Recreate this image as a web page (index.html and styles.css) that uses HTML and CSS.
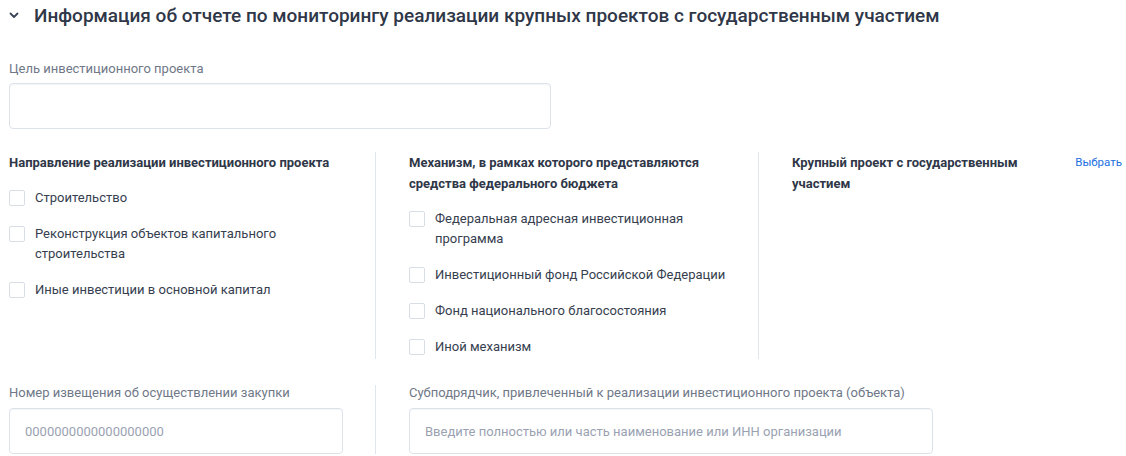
FILE: index.html
```html
<!DOCTYPE html>
<html>
<head>
    <title>Информация об отчете</title>
    <link rel="stylesheet" href="styles.css">
</head>
<body>
    <div class="section">
        <div class="section-header">
            <svg class="chevron" width="12" height="12" viewBox="0 0 12 12">
                <path d="M2.5 4.5 L6 8 L9.5 4.5" fill="none" stroke="#3a4356" stroke-width="1.8" stroke-linecap="round" stroke-linejoin="round"/>
            </svg>
            <h2>Информация об отчете по мониторингу реализации крупных проектов с государственным участием</h2>
        </div>

        <div class="field goal">
            <label class="field-label">Цель инвестиционного проекта</label>
            <div class="input"></div>
        </div>

        <div class="columns">
            <div class="col">
                <div class="col-title">Направление реализации инвестиционного проекта</div>
                <div class="checks">
                    <label class="check"><span class="box"></span><span>Строительство</span></label>
                    <label class="check"><span class="box"></span><span>Реконструкция объектов капитального строительства</span></label>
                    <label class="check"><span class="box"></span><span>Иные инвестиции в основной капитал</span></label>
                </div>
            </div>
            <div class="col">
                <div class="col-title">Механизм, в рамках которого представляются средства федерального бюджета</div>
                <div class="checks">
                    <label class="check"><span class="box"></span><span>Федеральная адресная инвестиционная программа</span></label>
                    <label class="check"><span class="box"></span><span>Инвестиционный фонд Российской Федерации</span></label>
                    <label class="check"><span class="box"></span><span>Фонд национального благосостояния</span></label>
                    <label class="check"><span class="box"></span><span>Иной механизм</span></label>
                </div>
            </div>
            <div class="col">
                <div class="col-head">
                    <div class="col-title">Крупный проект с государственным участием</div>
                    <a class="link" href="#">Выбрать</a>
                </div>
            </div>
        </div>

        <div class="columns bottom">
            <div class="col">
                <label class="field-label">Номер извещения об осуществлении закупки</label>
                <div class="input small placeholder">0000000000000000000</div>
            </div>
            <div class="col">
                <label class="field-label">Субподрядчик, привлеченный к реализации инвестиционного проекта (объекта)</label>
                <div class="input wide placeholder">Введите полностью или часть наименование или ИНН организации</div>
            </div>
        </div>
    </div>
</body>
</html>
```

FILE: styles.css
```css
/* Global styles */
body {
    font-family: Roboto, 'Liberation Sans', Arial, sans-serif;
    background-color: #ffffff;
    color: #333b4c;
    margin: 0;
    padding: 0 4px 0 9px;
}

/* Section header */
.section-header {
    display: flex;
    align-items: center;
    height: 30px;
    margin-left: -1px;
}

.chevron {
    margin-right: 14px;
}

.section-header h2 {
    margin: 0;
    font-size: 19px;
    font-weight: 500;
    color: #2f3748;
    white-space: nowrap;
}

/* Fields */
.field-label {
    display: block;
    font-size: 13px;
    line-height: 16px;
    color: #6f7888;
    margin-bottom: 7px;
}

.goal {
    margin-top: 31px;
}

.goal .field-label {
    margin-bottom: 6px;
}

.input {
    box-sizing: border-box;
    height: 46px;
    width: 542px;
    border: 1px solid #dce2ea;
    border-radius: 4px;
    box-shadow: inset 0 1px 1px rgba(0, 0, 0, 0.04);
    font-size: 13px;
    display: flex;
    align-items: center;
    padding: 0 15px;
}

.input.small {
    width: 334px;
}

.input.wide {
    width: 524px;
}

.placeholder {
    color: #9aa2b2;
}

/* Columns */
.columns {
    display: grid;
    grid-template-columns: 366px 383px 1fr;
    margin-top: 23px;
}

.col {
    padding: 0 20px 0 33px;
    border-left: 1px solid #e1e6ee;
}

.col:first-child {
    padding-left: 0;
    border-left: none;
}

.col:last-child {
    padding-right: 0;
}

.col-head {
    display: flex;
    justify-content: space-between;
    align-items: flex-start;
}

.col-head .col-title {
    width: 250px;
}

.col-title {
    font-size: 13px;
    font-weight: 700;
    line-height: 21px;
    color: #2f3748;
}

.link {
    font-size: 11.5px;
    line-height: 21px;
    color: #1b6fe0;
    text-decoration: none;
}

.checks {
    display: flex;
    flex-direction: column;
    gap: 16px;
    margin-top: 15px;
    padding-bottom: 2px;
}

.check {
    display: flex;
    align-items: flex-start;
    font-size: 13px;
    line-height: 20px;
    color: #363e4f;
}

.box {
    flex: none;
    box-sizing: border-box;
    width: 16px;
    height: 16px;
    border: 1px solid #d8dde6;
    border-radius: 2px;
    margin: 2px 10px 0 0;
}

/* Bottom row */
.columns.bottom {
    margin-top: 26px;
    grid-template-columns: 366px 1fr;
}

.columns.bottom .col {
    padding-right: 0;
}
```
